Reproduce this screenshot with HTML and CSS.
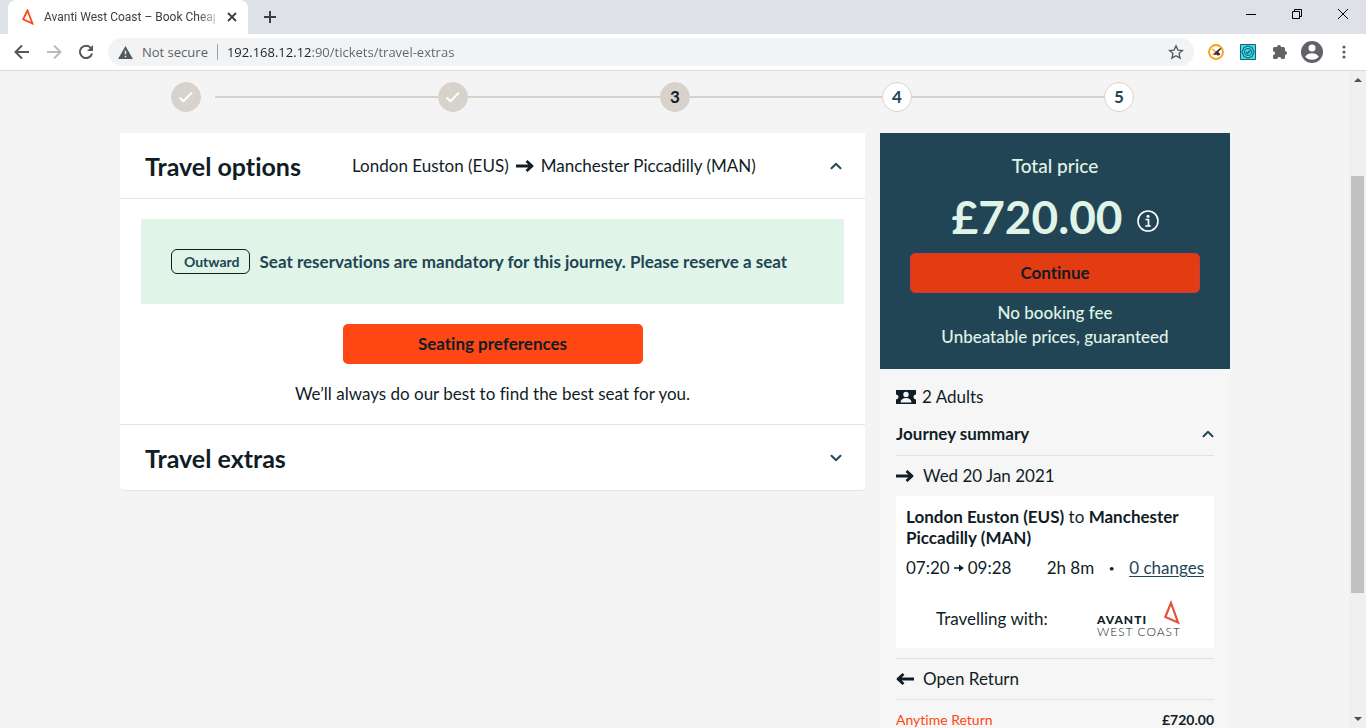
FILE: index.html
```html
<!DOCTYPE html>
<html lang="en">
<head>
<meta charset="utf-8">
<meta name="viewport" content="width=device-width, initial-scale=1">
<title>Avanti West Coast – Book Cheap</title>
<link rel="stylesheet" href="styles.css">
</head>
<body>
<svg class="sprite" aria-hidden="true">
  <symbol id="arrow" viewBox="0 0 18 12"><path d="M0 6h15M10.500 1l5.500 5-5.500 5" fill="none" stroke="currentColor" stroke-width="2.800" stroke-linejoin="round"/></symbol>
  <symbol id="chevron" viewBox="0 0 12 8"><path d="M1.500 6.300 6 1.800l4.500 4.500" fill="none" stroke="currentColor" stroke-width="2" stroke-linecap="round"/></symbol>
  <symbol id="check" viewBox="0 0 16 12"><path d="M1.500 6.500 5.500 10.200 14 1.500" fill="none" stroke="currentColor" stroke-width="2"/></symbol>
</svg>

<header class="browser">
  <div class="tabstrip">
    <div class="tab">
      <svg class="tab-logo" viewBox="0 0 12 16"><path d="M5.500 1.500 1.200 10.200 10.500 14.500z" fill="none" stroke="#ff4713" stroke-width="1.800"/></svg>
      <span class="tab-title">Avanti West Coast – Book Cheap</span>
      <button class="plain tab-close" aria-label="Close tab"><svg viewBox="0 0 10 10" width="10" height="10"><path d="M1 1l8 8M9 1 1 9" stroke="#3c4043" stroke-width="1.800"/></svg></button>
    </div>
    <button class="plain new-tab" aria-label="New tab"><svg viewBox="0 0 12 12" width="12" height="12"><path d="M6 0v12M0 6h12" stroke="#3c4043" stroke-width="2"/></svg></button>
    <div class="window-controls">
      <button class="plain" aria-label="Minimise"><svg viewBox="0 0 10 10" width="10" height="10"><path d="M0 5.500h10" stroke="#000"/></svg></button>
      <button class="plain" aria-label="Restore"><svg viewBox="0 0 10 10" width="10" height="10"><path d="M.5 2.500h7v7h-7zM2.500 2.500v-2h7v7h-2" fill="none" stroke="#000"/></svg></button>
      <button class="plain" aria-label="Close"><svg viewBox="0 0 10 10" width="10" height="10"><path d="M0 0l10 10M10 0 0 10" stroke="#000"/></svg></button>
    </div>
  </div>
  <div class="toolbar">
    <div class="nav-buttons">
      <button class="plain" aria-label="Back"><svg viewBox="0 0 16 16" width="16" height="16"><path d="M15 8H2M8 1.500 1.500 8 8 14.500" fill="none" stroke="#54585d" stroke-width="2"/></svg></button>
      <button class="plain" aria-label="Forward"><svg viewBox="0 0 16 16" width="16" height="16"><path d="M1 8h13M8 1.500 14.500 8 8 14.500" fill="none" stroke="#b9bbbe" stroke-width="2"/></svg></button>
      <button class="plain" aria-label="Reload"><svg viewBox="0 0 16 16" width="16" height="16"><path d="M13 4A6.200 6.200 0 1 0 14.100 9.500" fill="none" stroke="#54585d" stroke-width="2"/><path d="M15 1v6H9z" fill="#54585d"/></svg></button>
    </div>
    <div class="omnibox">
      <svg viewBox="0 0 16 14" width="15" height="13"><path d="M8 0l8 14H0z" fill="#54585d"/><path d="M8 5v4M8 10.500v1.700" stroke="#f1f3f4" stroke-width="1.600"/></svg>
      <label class="insecure" for="url">Not secure</label>
      <input id="url" class="url" type="text" value="192.168.12.12:90/tickets/travel-extras">
      <button class="plain" aria-label="Bookmark this page"><svg viewBox="0 0 16 16" width="16" height="16"><path d="M8 1.800l1.900 4.300 4.600.4-3.500 3 1.100 4.600L8 11.700l-4.100 2.400L5 9.500l-3.500-3 4.600-.4z" fill="none" stroke="#54585d" stroke-width="1.300"/></svg></button>
    </div>
    <div class="extensions">
      <button class="plain" aria-label="Clock extension"><svg viewBox="0 0 16 16" width="16" height="16"><circle cx="8" cy="8" r="7" fill="#fff" stroke="#f9a01b" stroke-width="1.800"/><path d="M4 5l8 6M4.500 11 12 5" stroke="#f59a23" stroke-width="1.300" fill="none"/><path d="M12.800 4.500 7.500 9M6 10h6M10 7.500v4" stroke="#222" stroke-width="1.400"/></svg></button>
      <button class="plain" aria-label="Security extension"><svg viewBox="0 0 16 16" width="16" height="16"><path d="M.5.5h15v15H.5z" fill="#3de0ec" stroke="#1d5e6c"/><path d="M8 2l4 1.500L14 8l-2 4.500L8 14l-4-1.500L2 8l2-4.500z" fill="none" stroke="#17758a" stroke-width="1.300"/><circle cx="8" cy="8" r="3.600" fill="none" stroke="#17606f"/><path d="M6 8l1.500 1.500L10 6.500" fill="none" stroke="#17606f" stroke-width="1.300"/></svg></button>
      <button class="plain" aria-label="Extensions"><svg viewBox="0 0 16 16" width="16" height="16"><path d="M1 4.500q0-1.500 1.500-1.500H5a2 2 0 0 1 4 0h2.500Q13 3 13 4.500V7a2 2 0 0 1 0 4v2.500q0 1.500-1.500 1.500H9.300a2 2 0 0 0-4 0H2.500Q1 15 1 13.500v-2.300a2 2 0 0 0 0-4z" fill="#5f6368"/></svg></button>
      <button class="plain" aria-label="Profile"><svg viewBox="0 0 22 22" width="22" height="22"><circle cx="11" cy="11" r="11" fill="#5f6368"/><circle cx="11" cy="7" r="3.500" fill="#fff"/><path d="M4.200 15.500Q7 12.200 11 12.200t6.800 3.300Q15.500 18.800 11 18.800t-6.800-3.300z" fill="#fff"/></svg></button>
      <button class="plain" aria-label="Menu"><svg viewBox="0 0 4 14" width="4" height="14"><g fill="#5f6368"><circle cx="2" cy="2" r="1.600"/><circle cx="2" cy="7" r="1.600"/><circle cx="2" cy="12" r="1.600"/></g></svg></button>
    </div>
  </div>
</header>

<div class="viewport">
  <div class="page">
    <ol class="steps">
      <li class="step step-first"><span class="dot dot-done"><svg width="16" height="12"><use href="#check"/></svg></span></li>
      <li class="step"><span class="dot dot-done"><svg width="16" height="12"><use href="#check"/></svg></span></li>
      <li class="step"><span class="dot dot-current">3</span></li>
      <li class="step"><span class="dot">4</span></li>
      <li class="step step-last"><span class="dot">5</span></li>
    </ol>

    <div class="columns">
      <main class="panels">
        <section>
          <div class="panel-head">
            <h2 class="panel-title">Travel options</h2>
            <p class="route">London Euston (EUS) <svg width="18" height="12"><use href="#arrow"/></svg> Manchester Piccadilly (MAN)</p>
            <button class="plain toggle" aria-label="Collapse travel options"><svg width="12" height="8"><use href="#chevron"/></svg></button>
          </div>
          <div class="panel-body">
            <div class="alert"><span class="badge">Outward</span><span>Seat reservations are mandatory for this journey. Please reserve a seat</span></div>
            <button class="cta seating">Seating preferences</button>
            <p class="note">We’ll always do our best to find the best seat for you.</p>
          </div>
        </section>
        <section class="panel-next">
          <div class="panel-head">
            <h2 class="panel-title">Travel extras</h2>
            <button class="plain toggle toggle-down" aria-label="Expand travel extras"><svg width="12" height="8"><use href="#chevron"/></svg></button>
          </div>
        </section>
      </main>

      <aside class="basket">
        <div class="total">
          <p class="total-label">Total price</p>
          <p class="total-price"><span>£720.00</span>
            <button class="plain" aria-label="Price information"><svg viewBox="0 0 22 22" width="22" height="22"><circle cx="11" cy="11" r="10" fill="none" stroke="#fff" stroke-width="1.600"/><path d="M8.500 9.500h3v6M8.300 16h5.400" fill="none" stroke="#fff" stroke-width="1.700"/><circle cx="11" cy="6.300" r="1.500" fill="#fff"/></svg></button>
          </p>
          <button class="cta continue">Continue</button>
          <p class="total-note">No booking fee<br>Unbeatable prices, guaranteed</p>
        </div>
        <div class="summary">
          <p class="passengers"><svg viewBox="0 0 20 14" width="20" height="14"><path d="M0 0h20v4.500a2.500 2.500 0 0 0 0 5V14H0V9.500a2.500 2.500 0 0 0 0-5z" fill="#111d26"/><circle cx="10" cy="4.400" r="2.700" fill="#f6f6f6"/><path d="M4.500 12.500q.5-4.500 5.500-4.500t5.500 4.500z" fill="#f6f6f6"/></svg>2 Adults</p>
          <div class="summary-head">
            <h3>Journey summary</h3>
            <button class="plain" aria-label="Collapse journey summary"><svg width="12" height="8"><use href="#chevron"/></svg></button>
          </div>
          <p class="leg leg-out"><svg width="18" height="12"><use href="#arrow"/></svg>Wed 20 Jan 2021</p>
          <div class="journey">
            <p class="journey-name"><b>London Euston (EUS)</b> to <b>Manchester Piccadilly (MAN)</b></p>
            <div class="journey-times">
              <span class="times">07:20 <svg viewBox="0 0 10 8" width="10" height="8"><path d="M0 4h7" stroke="#111d26" stroke-width="1.500"/><path d="M5 .5 10 4 5 7.500z" fill="#111d26"/></svg> 09:28</span>
              <span class="duration">2h 8m</span>
              <span class="bullet">•</span>
              <a class="changes" href="#changes">0 changes</a>
            </div>
            <div class="operator">
              <span>Travelling with:</span>
              <div class="logo">
                <div class="logo-top"><span class="logo-name">AVANTI</span><svg viewBox="0 0 18 26" width="18" height="26"><path d="M8 3 2.300 17 15 22.500z" fill="none" stroke="#e2533a" stroke-width="2.200"/></svg></div>
                <span class="logo-sub">WEST COAST</span>
              </div>
            </div>
          </div>
          <p class="leg leg-return"><svg class="flip" width="18" height="12"><use href="#arrow"/></svg>Open Return</p>
          <p class="fare"><span>Anytime Return</span><b>£720.00</b></p>
        </div>
      </aside>
    </div>
  </div>
  <div class="scrollbar" aria-hidden="true">
    <svg viewBox="0 0 8 4" width="8" height="4"><path d="M4 0l4 4H0z" fill="#505050"/></svg>
    <div class="track"><div class="thumb"></div></div>
    <svg viewBox="0 0 8 4" width="8" height="4"><path d="M0 0h8L4 4z" fill="#505050"/></svg>
  </div>
</div>
</body>
</html>
```
FILE: styles.css
```css
* { box-sizing: border-box; }
body {
  margin: 0;
  height: 100vh;
  display: flex;
  flex-direction: column;
  overflow: hidden;
  background: #f4f4f4;
  color: #111d26;
  font: 17px/24px Lato, "Liberation Sans", sans-serif;
  font-variant-ligatures: none;
}
h2, h3, p, ol { margin: 0; padding: 0; }
svg { display: block; flex: none; }
.sprite { position: absolute; width: 0; height: 0; }
.plain {
  display: grid;
  place-items: center;
  padding: 0;
  border: 0;
  background: none;
  color: inherit;
  font: inherit;
}

/* Browser frame */
.browser {
  flex: none;
  background: #dee1e6;
  border-bottom: 1px solid #d9dadc;
  font: 13px/16px "Open Sans", "Noto Sans", sans-serif;
}
.tabstrip { display: flex; height: 34px; }
.tab {
  display: flex;
  align-items: center;
  width: 240px;
  margin-left: 8px;
  padding: 0 11px 0 14px;
  background: #fff;
  border-radius: 8px 8px 0 0;
}
.tab-logo { width: 12px; height: 16px; margin-right: 10px; }
.tab-title {
  flex: 1;
  overflow: hidden;
  white-space: nowrap;
  font-family: Roboto, "Open Sans", sans-serif;
  font-size: 12px;
  color: #3c4043;
  -webkit-mask-image: linear-gradient(90deg, #000 90%, rgba(0, 0, 0, .3));
  mask-image: linear-gradient(90deg, #000 90%, rgba(0, 0, 0, .3));
}
.tab-close { margin-left: 12px; }
.new-tab { margin-left: 16px; }
.window-controls { display: flex; gap: 36px; margin-left: auto; padding: 0 18px 6px 0; }
.toolbar { display: flex; align-items: center; height: 36px; padding-right: 20px; background: #fff; }
.nav-buttons { display: flex; gap: 16px; padding: 0 14px; }
.omnibox {
  flex: 1;
  display: flex;
  align-items: center;
  height: 28px;
  padding: 0 10px;
  border-radius: 14px;
  background: #f1f3f4;
}
.insecure {
  margin-left: 9px;
  padding-right: 9px;
  border-right: 1px solid #9aa0a6;
  color: #5f6368;
}
.url {
  flex: 1;
  min-width: 0;
  margin-left: 9px;
  padding: 0;
  border: 0;
  outline: 0;
  font: inherit;
  color: transparent;
  background: linear-gradient(90deg, #202124 85px, #5f6368 85px);
  -webkit-background-clip: text;
  background-clip: text;
}
.extensions { display: flex; align-items: center; gap: 16px; padding-left: 14px; }
.extensions button:nth-child(4) { margin: 0 3px 0 -3px; }

/* Scrolling area */
.viewport { flex: 1; display: flex; min-height: 0; }
.page { flex: 1; min-width: 0; overflow: hidden; padding: 11px 0 0 1px; }
.steps, .columns { width: 100%; max-width: 1110px; margin: 0 auto; }
.scrollbar {
  display: flex;
  flex-direction: column;
  align-items: center;
  width: 17px;
  padding: 7px 0;
  background: #f0f0f0;
}
.track { flex: 1; width: 13px; padding-top: 94px; }
.thumb { height: 77%; background: #c1c1c1; }

/* Progress */
.steps { display: flex; list-style: none; font-weight: 700; }
.step { flex: 1; display: flex; align-items: center; }
.step::before, .step::after { content: ""; flex: 1; height: 2px; background: #d7d2cb; }
.step-first::before { flex: none; width: 51px; background: none; }
.step-first .dot { margin-right: 14px; }
.step-last::after { background: none; }
.dot {
  display: grid;
  place-items: center;
  width: 30px;
  height: 30px;
  border: 1px solid #d7d2cb;
  border-radius: 50%;
  background: #fff;
  color: #214555;
}
.dot-done { background: #d7d2cb; color: #fff; }
.dot-current { background: #d7d2cb; color: #111d26; }

/* Panels */
.columns { display: flex; align-items: flex-start; gap: 15px; margin-top: 21px; }
.panels {
  flex: 1;
  min-width: 0;
  background: #fff;
  border-bottom: 1px solid #e4e4e4;
  border-radius: 0 0 4px 4px;
}
.panel-head { display: flex; align-items: center; height: 65px; padding: 0 23px 0 25px; }
.panel-title { flex: none; width: 207px; font-size: 25px; line-height: 32px; font-weight: 700; }
.route { display: flex; align-items: center; gap: 7px; }
.toggle { margin-left: auto; color: #214555; }
.toggle-down { transform: rotate(180deg); }
.panel-body { padding: 20px 21px 18px; border-top: 1px solid #e4e4e4; }
.panel-next { border-top: 1px solid #e4e4e4; }
.alert {
  display: flex;
  align-items: center;
  gap: 10px;
  padding: 30px;
  background: #e0f4e7;
  color: #214555;
  font-weight: 700;
}
.badge {
  padding: 0 9px 0 12px;
  border: 1px solid #111d26;
  border-radius: 6px;
  font-size: 14px;
  line-height: 23px;
}
.cta {
  display: block;
  height: 40px;
  padding: 0;
  border: 0;
  border-radius: 5px;
  background: #ff4713;
  color: #111d26;
  font: inherit;
  font-weight: 700;
}
.seating { width: 300px; margin: 20px auto 18px; }
.note { text-align: center; }

/* Basket */
.basket { flex: none; width: 350px; background: #f6f6f6; }
.total { padding: 21px 30px 20px; background: #214555; color: #e0f4e7; text-align: center; }
.total-label { font-size: 19px; font-weight: 500; }
.total-price {
  display: flex;
  align-items: center;
  justify-content: center;
  gap: 14px;
  margin: 14px 0 12px;
  font-size: 46px;
  line-height: 49px;
  font-weight: 700;
}
.total-price button { padding-top: 8px; }
.continue { width: 100%; border: 1px solid #c93a48; background: #e33c12; }
.total-note { margin-top: 8px; font-weight: 500; }
.summary { padding: 16px 16px 0; }
.passengers { display: flex; align-items: center; gap: 6px; }
.summary-head {
  display: flex;
  align-items: center;
  justify-content: space-between;
  height: 47px;
  padding: 3px 0 0;
  border-bottom: 1px solid #e2e2e2;
}
.summary-head h3 { font-size: 17px; font-weight: 700; }
.summary-head button { color: #214555; }
.leg { display: flex; align-items: center; gap: 9px; height: 40px; }
.journey { padding: 10px 10px 10px; background: #fff; }
.journey-name { line-height: 21px; }
.journey-times { display: flex; align-items: center; margin-top: 8px; }
.times { display: flex; align-items: center; gap: 4px; }
.duration { margin-left: auto; }
.bullet { width: 35px; text-align: center; font-size: 10px; }
.changes { color: #214555; text-underline-offset: 2px; }
.operator { display: flex; align-items: center; justify-content: space-between; margin-top: 20px; padding: 0 23px 0 30px; }
.logo { width: 84px; }
.logo-top { display: flex; align-items: flex-end; justify-content: space-between; }
.logo-name { font-size: 12px; line-height: 12px; font-weight: 900; letter-spacing: 1px; }
.logo-sub { display: block; font-size: 12px; line-height: 12px; font-weight: 300; letter-spacing: 1px; white-space: nowrap; }
.leg-return { height: 42px; margin-top: 10px; border: solid #e2e2e2; border-width: 1px 0; }
.flip { transform: scaleX(-1); }
.fare { display: flex; justify-content: space-between; padding-top: 8px; font-size: 14px; }
.fare span { color: #ff4713; }
```
